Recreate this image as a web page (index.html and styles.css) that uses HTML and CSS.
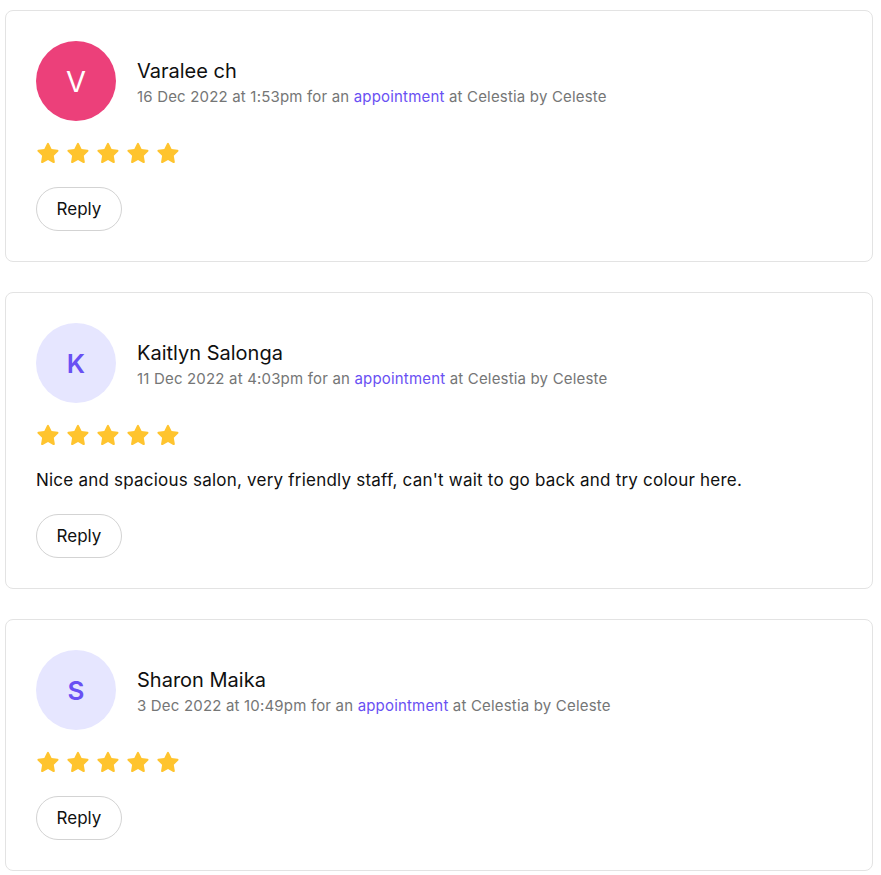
FILE: index.html
```html
<!DOCTYPE html>
<html>
<head>
<meta charset="utf-8">
<link rel="stylesheet" href="styles.css">
</head>
<body>
<svg width="0" height="0" class="defs">
  <defs>
    <symbol id="star" viewBox="0 0 24 24">
      <path d="M12 1.8c.4 0 .7.2.9.6l2.7 5.5 6 .9c.9.1 1.2 1.2.6 1.8l-4.4 4.2 1 6c.2.9-.8 1.6-1.6 1.1L12 19.1l-5.3 2.8c-.8.5-1.8-.2-1.6-1.1l1-6-4.4-4.2c-.6-.6-.3-1.7.6-1.8l6-.9 2.7-5.5c.2-.4.6-.6 1-.6z"/>
    </symbol>
  </defs>
</svg>
<main class="list">
  <article class="card">
    <div class="head">
      <div class="avatar avatar-pink">V</div>
      <div class="meta">
        <div class="name">Varalee ch</div>
        <div class="date">16 Dec 2022 at 1:53pm for an <a class="link">appointment</a> at Celestia by Celeste</div>
      </div>
    </div>
    <div class="stars">
      <svg class="star"><use href="#star"/></svg><svg class="star"><use href="#star"/></svg><svg class="star"><use href="#star"/></svg><svg class="star"><use href="#star"/></svg><svg class="star"><use href="#star"/></svg>
    </div>
    <button class="reply">Reply</button>
  </article>
  <article class="card">
    <div class="head">
      <div class="avatar avatar-lilac">K</div>
      <div class="meta">
        <div class="name">Kaitlyn Salonga</div>
        <div class="date">11 Dec 2022 at 4:03pm for an <a class="link">appointment</a> at Celestia by Celeste</div>
      </div>
    </div>
    <div class="stars">
      <svg class="star"><use href="#star"/></svg><svg class="star"><use href="#star"/></svg><svg class="star"><use href="#star"/></svg><svg class="star"><use href="#star"/></svg><svg class="star"><use href="#star"/></svg>
    </div>
    <p class="text">Nice and spacious salon, very friendly staff, can't wait to go back and try colour here.</p>
    <button class="reply">Reply</button>
  </article>
  <article class="card">
    <div class="head">
      <div class="avatar avatar-lilac">S</div>
      <div class="meta">
        <div class="name">Sharon Maika</div>
        <div class="date">3 Dec 2022 at 10:49pm for an <a class="link">appointment</a> at Celestia by Celeste</div>
      </div>
    </div>
    <div class="stars">
      <svg class="star"><use href="#star"/></svg><svg class="star"><use href="#star"/></svg><svg class="star"><use href="#star"/></svg><svg class="star"><use href="#star"/></svg><svg class="star"><use href="#star"/></svg>
    </div>
    <button class="reply">Reply</button>
  </article>
</main>
</body>
</html>
```
FILE: styles.css
```css
* { box-sizing: border-box; }
html, body { background: #fff; }
body {
  margin: 0;
  padding: 10px 8px 0 5px;
  font-family: Inter, "Noto Sans", sans-serif;
  color: #101010;
}
.defs { position: absolute; width: 0; height: 0; }
.list {
  display: flex;
  flex-direction: column;
  gap: 30px;
}
.card {
  border: 1px solid #e3e3e3;
  border-radius: 8px;
  padding: 30px;
  display: flex;
  flex-direction: column;
  align-items: flex-start;
}
.head {
  display: flex;
  align-items: center;
  gap: 21px;
}
.avatar {
  width: 80px;
  height: 80px;
  border-radius: 50%;
  display: flex;
  align-items: center;
  justify-content: center;
  flex-shrink: 0;
}
.avatar-pink { background: #ec407a; color: #fff; font-size: 29px; font-weight: 400; }
.avatar-lilac { background: #e6e6ff; color: #6950f3; font-size: 26px; font-weight: 600; }
.meta { display: flex; flex-direction: column; padding-top: 4px; }
.name {
  font-size: 20px;
  line-height: 28px;
  color: #101010;
}
.date {
  font-size: 15px;
  line-height: 24px;
  color: #757676;
  letter-spacing: 0.18px;
}
.link { color: #6950f3; }
.stars {
  display: flex;
  gap: 6px;
  margin-top: 20px;
  height: 24px;
  align-items: center;
}
.star { width: 24px; height: 24px; fill: #ffc42e; }
.text {
  margin: 21px 0 0;
  font-size: 17px;
  line-height: 24px;
  letter-spacing: 0.22px;
  color: #101010;
}
.reply {
  margin-top: 22px;
  width: 86px;
  height: 44px;
  padding: 0;
  border: 1px solid #d3d3d3;
  border-radius: 22px;
  background: #fff;
  font-family: inherit;
  font-size: 17px;
  color: #101010;
}
```
